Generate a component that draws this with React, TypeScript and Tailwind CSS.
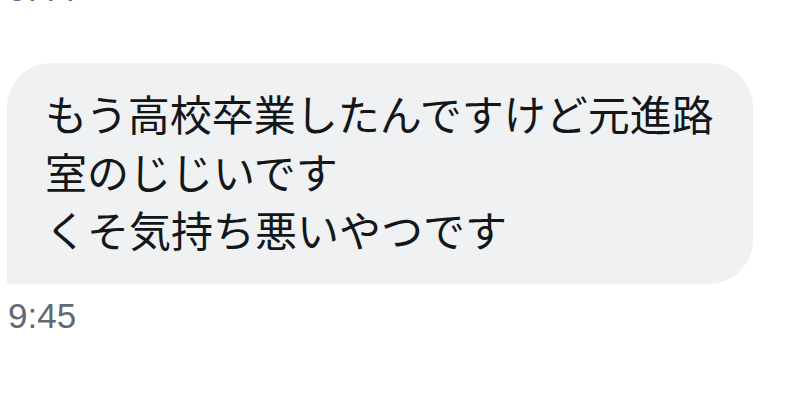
export default function App() {
  return (
    <div
      className="w-[787px] h-[405px] overflow-hidden bg-white"
      style={{ fontFamily: '"Liberation Sans", "Noto Sans CJK JP", sans-serif' }}
    >
      <div className="-mt-[31px] pl-[8px] text-[35px] leading-[40px] text-[#5f6a74]">9:44</div>
      <div className="mt-[54px] ml-[7px] w-[746px] h-[221px] rounded-[44px] rounded-bl-none bg-[#eff1f3] pl-[38px] pt-[21px]">
        <p className="text-[42px] leading-[58px] text-[#14171a]" style={{ fontFamily: '"Noto Sans CJK JP", sans-serif' }}>
          もう高校卒業したんですけど元進路
          <br />
          室のじじいです
          <br />
          くそ気持ち悪いやつです
        </p>
      </div>
      <div className="mt-[12px] pl-[8px] text-[35px] leading-[40px] text-[#5f6a74]">9:45</div>
    </div>
  );
}
